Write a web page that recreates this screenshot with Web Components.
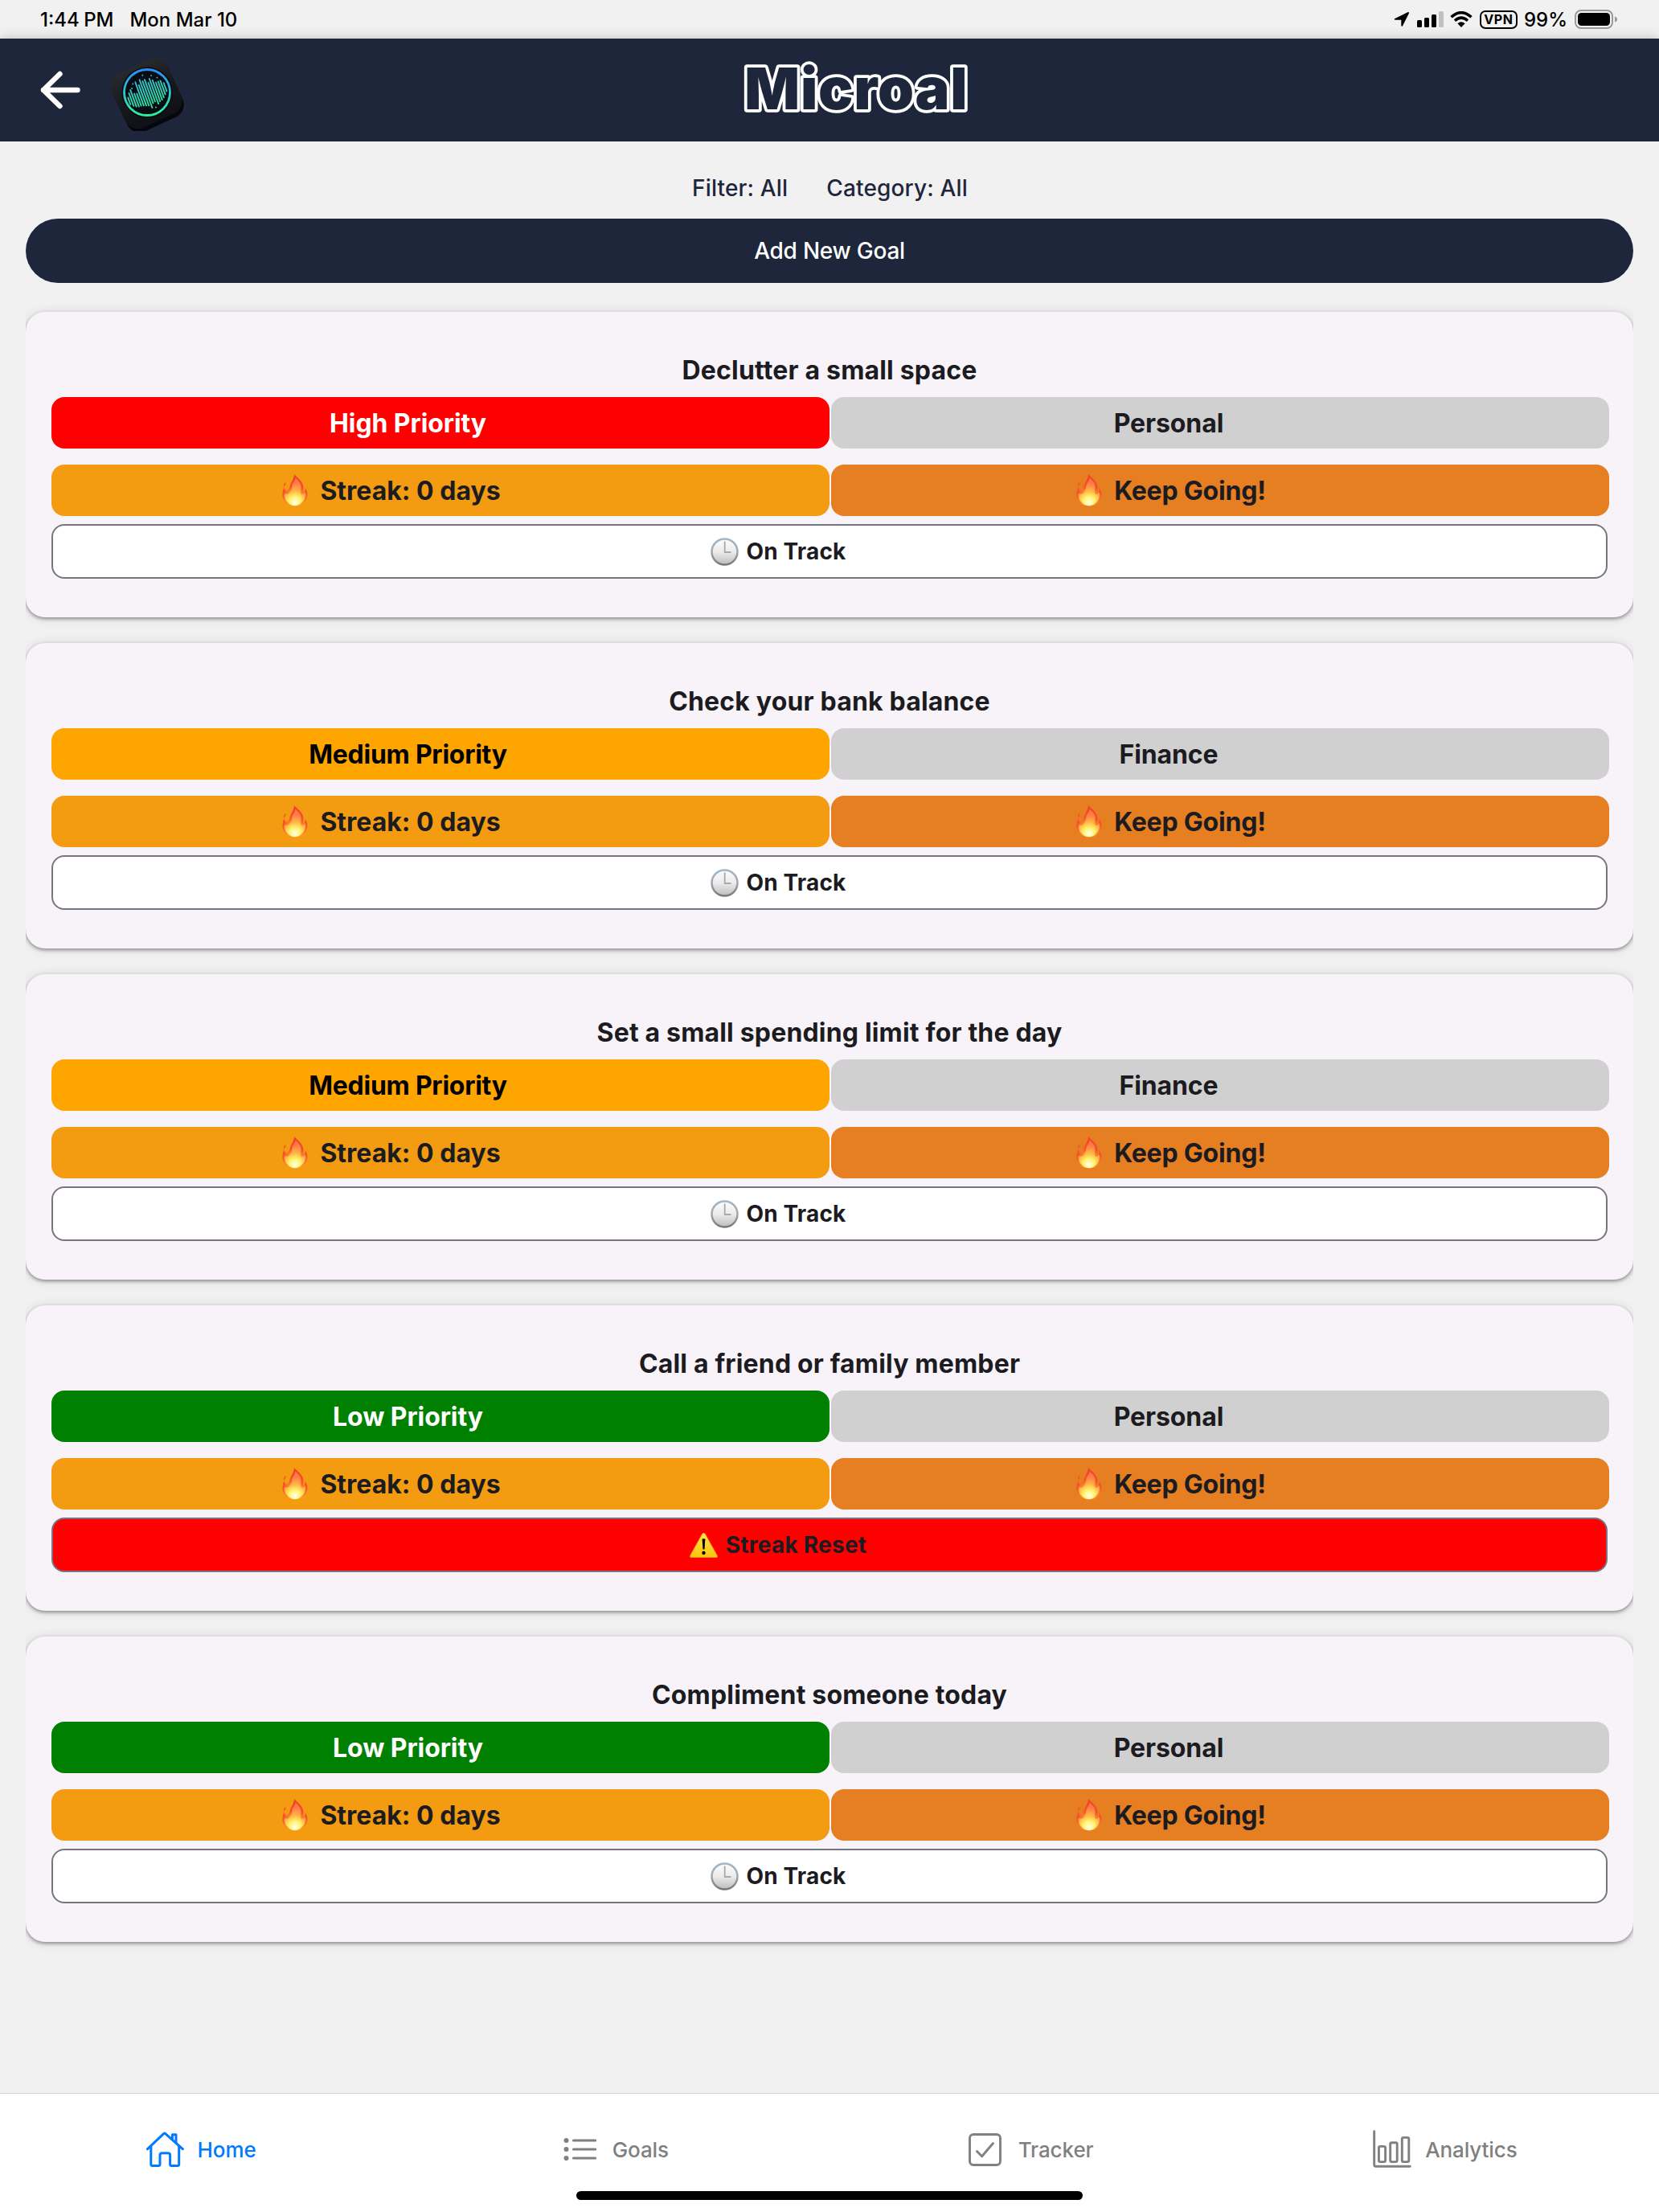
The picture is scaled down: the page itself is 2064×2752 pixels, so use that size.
<!DOCTYPE html>
<html lang="en">
<head>
<meta charset="utf-8">
<title>Microal</title>
<style>
  html, body { margin: 0; height: 100%; }
  body { background: #f1f1f1; font-family: Inter, "Liberation Sans", sans-serif; }
</style>
</head>
<body>
<microal-app></microal-app>

<script>
// Attach an open shadow root and fill it with the given markup
function shadow(el, html) {
  const root = el.shadowRoot || el.attachShadow({ mode: "open" });
  root.innerHTML = html;
  return root;
}

const ICONS = {
  fire: `<svg width="32" height="40" viewBox="0 0 32 40">
    <defs>
      <radialGradient id="f1" gradientUnits="userSpaceOnUse" cx="16" cy="31" r="27">
        <stop offset="0" stop-color="#ffd43a"/><stop offset=".36" stop-color="#ff9b2e"/>
        <stop offset=".6" stop-color="#f9502a"/><stop offset="1" stop-color="#f2432f"/>
      </radialGradient>
      <radialGradient id="f2" gradientUnits="userSpaceOnUse" cx="16" cy="35" r="24">
        <stop offset="0" stop-color="#fffff0"/><stop offset=".3" stop-color="#fff46b"/>
        <stop offset=".6" stop-color="#ffb643"/><stop offset="1" stop-color="#ff7a45"/>
      </radialGradient>
    </defs>
    <path fill="url(#f1)" d="M15 0C18 4 26 8 26.500 16C26.600 19 25.500 21 27 22C29 22 28.600 18 28.500 16.500C31 20 32.500 25 30.500 30C28.500 36.500 22.500 39.500 16 39.500C9 39.500 3 36 1 29.500C-.5 24 1.500 20 2 16.500C3.500 18 3.500 20.500 5 21C8.500 20 9 17 10 13.500C11 9.500 14.500 6.500 15 0Z"/>
    <path fill="#f9502a" d="M4.500 10C5 13 2.500 14.500 2.200 16C1.300 13.500 2.500 11 4.500 10Z"/>
    <path fill="url(#f2)" d="M16.500 4.500C19.500 8 24 10.500 23.500 16.500C23.200 20 22 22 24 25C26 26 27.500 23.500 28.300 22C30 27 28 32.500 24 35.500C21.500 38 19 39.300 16 39.300C12.500 39.300 9 37.500 7 35C3.500 32 2.500 28 3.500 24C6 25.500 9 24.500 11 20.500C13 16.500 11.500 13.500 14 10.500C16 8 16.500 6.500 16.500 4.500Z"/>
  </svg>`,
  clock: `<svg width="35" height="35" viewBox="0 0 35 35">
    <defs>
      <linearGradient id="c1" x1="0" y1="0" x2="0" y2="1">
        <stop offset="0" stop-color="#9fb6ca"/><stop offset=".5" stop-color="#a4a8ab"/><stop offset="1" stop-color="#777"/>
      </linearGradient>
      <linearGradient id="c2" x1="0" y1="0" x2="0" y2="1">
        <stop offset="0" stop-color="#fcfcfc"/><stop offset=".5" stop-color="#ececec"/><stop offset="1" stop-color="#bcbcbc"/>
      </linearGradient>
    </defs>
    <circle cx="17.500" cy="17.500" r="16" fill="url(#c2)" stroke="url(#c1)" stroke-width="2.500"/>
    <path d="M17.700 4.500V18H25.500" fill="none" stroke="#a9a9a9" stroke-width="1.800"/>
  </svg>`,
  warning: `<svg width="35" height="31" viewBox="0 0 35 31">
    <defs><linearGradient id="w1" x1="0" y1="0" x2="0" y2="1">
      <stop offset="0" stop-color="#ffe04a"/><stop offset="1" stop-color="#fdc50b"/>
    </linearGradient></defs>
    <path fill="url(#w1)" stroke="#d9a32a" stroke-width=".6" d="M15.700 1.300Q17.500-.8 19.300 1.300L34.300 28.300Q35.200 30.600 33 30.700H2Q-.2 30.600.7 28.300Z"/>
    <path d="M15.600 7.500H19.400L18.500 20.500H16.500Z"/><circle cx="17.500" cy="25" r="2.200"/>
  </svg>`,
  home: `<svg width="47" height="44" viewBox="0 0 47 44" fill="none" stroke="currentColor" stroke-width="3" stroke-linecap="round" stroke-linejoin="round">
    <path d="M1.500 21.700L21.300 2.800Q22.700 1.500 24.100 2.800L45.300 21.700"/>
    <path d="M5.800 18.500V40.500Q5.800 42.500 7.800 42.500H15Q17 42.500 17 40.500V29.500Q17 26.800 19.700 26.800H26.900Q29.600 26.800 29.600 29.500V40.500Q29.600 42.500 31.600 42.500H38.700Q40.700 42.500 40.700 40.500V18.500"/>
    <path d="M32.400 9.500V3.700H37V13.500"/>
  </svg>`,
  list: `<svg width="41" height="28" viewBox="0 0 41 28" stroke="currentColor" stroke-width="3.200" stroke-linecap="round">
    <path d="M12.500 3H39.500M12.500 14H39.500M12.500 25H39.500"/>
    <g fill="currentColor" stroke="none"><circle cx="3.500" cy="3" r="3"/><circle cx="3.500" cy="14" r="3"/><circle cx="3.500" cy="25" r="3"/></g>
  </svg>`,
  check: `<svg width="41" height="41" viewBox="0 0 41 41" fill="none" stroke="currentColor" stroke-width="2.900" stroke-linecap="round" stroke-linejoin="round">
    <rect x="1.500" y="1.500" width="38" height="38" rx="4.500"/><path d="M10.500 22.500L16.600 28.700L30.500 12.500"/>
  </svg>`,
  chart: `<svg width="48" height="48" viewBox="0 0 48 48" fill="none" stroke="currentColor" stroke-width="2.900" stroke-linecap="round" stroke-linejoin="round">
    <path d="M1.700 1.700V43.200Q1.700 45.200 3.700 45.200H46.300"/>
    <rect x="7.400" y="20.400" width="8.200" height="19.200" rx="1.800"/>
    <rect x="21.700" y="15.800" width="8.500" height="23.800" rx="1.800"/>
    <rect x="36.300" y="9.400" width="8.500" height="30.200" rx="1.800"/>
  </svg>`
};

class StatusBar extends HTMLElement {
  connectedCallback() {
    shadow(this, `
      <style>
        :host {
          display: flex;
          align-items: center;
          box-sizing: border-box;
          height: 48px;
          padding: 0 51px 0 50px;
          font-size: 24px;
          font-weight: 500;
          color: #000;
          background: #f1f1f1;
        }
        .date { margin-left: 20px; }
        .time { word-spacing: -1px; }
        .right { display: flex; align-items: center; margin-left: auto; }
        svg { display: block; }
        .vpn {
          box-sizing: border-box;
          width: 47px;
          height: 23px;
          border: 2.5px solid #000;
          border-radius: 7px;
          font: 700 16px/18px Inter, sans-serif;
          letter-spacing: .6px;
          text-align: center;
          margin: 0 8px 0 9px;
        }
      </style>
      <span class="time">1:44 PM</span>
      <span class="date">Mon Mar 10</span>
      <div class="right">
        <svg width="20" height="20" viewBox="0 0 20 20" style="margin-right:9px">
          <path d="M1.200 9.300L17.300 1.200Q19.400.6 18.800 2.700L11 18.200Q9.800 19.700 9.300 17.800V10.800H2Q-.1 10.300 1.200 9.300Z"/>
        </svg>
        <svg width="34" height="20" viewBox="0 0 34 20" style="margin-right:7px">
          <rect y="11" width="6" height="9" rx="1.500"/><rect x="9" y="8" width="6" height="12" rx="1.500"/>
          <rect x="18" y="4" width="6" height="16" rx="1.500"/><rect x="27" width="6" height="20" rx="1.500" fill="#c1c1c1"/>
        </svg>
        <svg width="28" height="20" viewBox="0 0 28 20" fill="none" stroke="#000" stroke-width="3.500">
          <path d="M1.500 7.300Q14-4 26.500 7.300"/><path d="M6 11.800Q14 4.600 22 11.800"/>
          <path fill="#000" stroke="none" d="M9.400 15.300Q14 11.300 18.600 15.300L14 20Z"/>
        </svg>
        <span class="vpn">VPN</span>
        <span>99%</span>
        <svg width="54" height="24" viewBox="0 0 54 24" style="margin-left:9px">
          <rect x="1" y="1" width="46" height="22" rx="7" fill="none" stroke="#9a9a9a" stroke-width="2"/>
          <rect x="4" y="4" width="40" height="16" rx="4.500"/>
          <path d="M50 8.500Q53 9.500 53 12T50 15.500Z" fill="#9a9a9a"/>
        </svg>
      </div>
    `);
  }
}

class AppHeader extends HTMLElement {
  connectedCallback() {
    shadow(this, `
      <style>
        :host {
          display: flex;
          align-items: center;
          box-sizing: border-box;
          height: 128px;
          padding: 0 164px 0 49px;
          background: #1e263b;
          box-shadow: 0 0 14px rgba(0, 0, 0, .22);
        }
        svg { display: block; flex: none; }
        .logo { margin: 10px 0 0 35px; }
        .title { margin: 0 auto; }
        .title text {
          font-size: 72px;
          font-weight: 900;
          letter-spacing: .8px;
          fill: #1e263b;
          stroke: #fff;
          stroke-width: 7.500px;
          stroke-linejoin: round;
          paint-order: stroke fill;
        }
      </style>
      <svg width="52" height="48" viewBox="0 0 52 48" fill="none" stroke="#fff" stroke-width="6.400" stroke-linecap="round" stroke-linejoin="round">
        <path d="M25.500 4L5 24L25.500 44M5 24H47.500"/>
      </svg>
      <svg class="logo" width="94" height="92" viewBox="-47 -46 94 92">
        <defs>
          <linearGradient id="ring" x1="0" y1="0" x2="0" y2="1">
            <stop offset="0" stop-color="#2490f5"/><stop offset=".5" stop-color="#2fc4d0"/><stop offset="1" stop-color="#2df09a"/>
          </linearGradient>
          <linearGradient id="bars" gradientUnits="userSpaceOnUse" x1="0" y1="-24" x2="0" y2="22">
            <stop offset="0" stop-color="#35b5d8"/><stop offset="1" stop-color="#2fe69a"/>
          </linearGradient>
          <linearGradient id="face" x1="0" y1="0" x2="0" y2="1">
            <stop offset="0" stop-color="#28292c"/><stop offset=".5" stop-color="#18191d"/><stop offset="1" stop-color="#101116"/>
          </linearGradient>
        </defs>
        <rect x="-38.500" y="-35" width="76" height="76" rx="17" fill="#06070d" transform="rotate(-25)"/>
        <rect x="-38.500" y="-38" width="76" height="74" rx="17" fill="url(#face)" transform="rotate(-25)"/>
        <circle cx="0" cy="-2" r="31.500" fill="#06080d"/>
        <circle cx="0" cy="-2" r="28.500" fill="#080d14" stroke="url(#ring)" stroke-width="2.800"/>
        <g transform="translate(0 -2) rotate(-20)" stroke="url(#bars)" stroke-width="1.900" stroke-linecap="round">
          <path d="M-24.500-2V7M-21.500-7V10M-18.500-10V12M-15.500-4V13M-12.500-3V13M-9.500-17V14M-6.500-12V15M-3.500-18V16M-.5-15V20M2.500-16V15M5.500-11V14M8.500-15V18M11.500-12V16M14.500-8V15M17.500-8V13M20.500-8V10M23.500-4V7"/>
          <path d="M-13-16V-16.100M-16-11V-11.100M2-22V-22.100M12-18V-18.100M18-13V-13.100M4 21V21.100"/>
        </g>
      </svg>
      <svg class="title" width="290" height="112" viewBox="0 0 290 112">
        <text x="145.400" y="80" text-anchor="middle">Microal</text>
      </svg>
    `);
  }
}

class GoalChip extends HTMLElement {
  connectedCallback() {
    const icon = this.getAttribute("icon");
    shadow(this, `
      <style>
        :host {
          display: flex;
          flex: none;
          align-items: center;
          justify-content: center;
          box-sizing: border-box;
          width: 968px;
          height: 64px;
          padding-right: 128px;
          border-radius: 16px;
          font-size: 32px;
          font-weight: 700;
          letter-spacing: -.1px;
          color: #1c1b1f;
          background: #d0d0d0;
        }
        :host([kind="high"]) { background: #ff0000; color: #fff; padding-right: 81px; }
        :host([kind="medium"]) { background: #ffa500; color: #000; padding-right: 81px; letter-spacing: -.25px; }
        :host([kind="low"]) { background: #008000; color: #fff; padding-right: 81px; }
        :host([kind="streak"]) { background: #f39c12; padding-right: 122px; letter-spacing: 0; }
        :host([kind="keep"]) { background: #e67e22; padding-right: 122px; letter-spacing: -.2px; }
        :host([kind="track"]), :host([kind="reset"]) {
          width: 1936px;
          height: 68px;
          border: 2px solid #79747e;
          background: #fff;
          font-size: 28px;
          letter-spacing: .15px;
        }
        :host([kind="reset"]) { background: #ff0000; letter-spacing: .25px; }
        svg { flex: none; margin-right: 15px; }
        :host([kind="track"]) svg, :host([kind="reset"]) svg { margin-right: 10px; }
      </style>
      ${icon ? ICONS[icon] : ""}
      <slot></slot>
    `);
  }
}

class GoalCard extends HTMLElement {
  connectedCallback() {
    const priority = this.getAttribute("priority");
    const reset = this.hasAttribute("reset");
    shadow(this, `
      <style>
        :host {
          display: block;
          box-sizing: border-box;
          height: 380px;
          padding: 53px 32px 0;
          border-radius: 24px;
          background: #f7f3f9;
          box-shadow: 0 2px 4px rgba(0, 0, 0, .38), 0 1px 14px rgba(0, 0, 0, .12);
        }
        h2 {
          margin: 0 0 13px;
          font-size: 32px;
          line-height: 40px;
          font-weight: 700;
          letter-spacing: .17px;
          text-align: center;
          color: #1c1b1f;
        }
        .row { display: flex; gap: 2px; }
        .row + .row { margin: 20px 0 10px; }
      </style>
      <h2><slot></slot></h2>
      <div class="row">
        <goal-chip kind="${priority.toLowerCase()}">${priority} Priority</goal-chip>
        <goal-chip>${this.getAttribute("category")}</goal-chip>
      </div>
      <div class="row">
        <goal-chip kind="streak" icon="fire">Streak: 0 days</goal-chip>
        <goal-chip kind="keep" icon="fire">Keep Going!</goal-chip>
      </div>
      ${reset
        ? `<goal-chip kind="reset" icon="warning">Streak Reset</goal-chip>`
        : `<goal-chip kind="track" icon="clock">On Track</goal-chip>`}
    `);
  }
}

class TabItem extends HTMLElement {
  connectedCallback() {
    shadow(this, `
      <style>
        :host {
          display: flex;
          flex: 1;
          align-items: center;
          justify-content: center;
          gap: 17px;
          padding-right: 16px;
          font-size: 26px;
          font-weight: 500;
          letter-spacing: -.1px;
          color: #808080;
        }
        :host([active]) { color: #007aff; }
        :host([icon="list"]) { gap: 20px; }
        :host([icon="check"]) { gap: 21px; padding-right: 15px; }
        svg { display: block; flex: none; }
      </style>
      ${ICONS[this.getAttribute("icon")]}
      <span><slot></slot></span>
    `);
  }
}

class TabBar extends HTMLElement {
  connectedCallback() {
    shadow(this, `
      <style>
        :host {
          display: block;
          box-sizing: border-box;
          height: 148px;
          border-top: 1px solid #d4d4d4;
          background: #fff;
        }
        nav { display: flex; box-sizing: border-box; height: 121px; padding-top: 17px; }
        .indicator { width: 630px; height: 11px; margin: 0 auto; border-radius: 6px; background: #000; }
      </style>
      <nav><slot></slot></nav>
      <div class="indicator"></div>
    `);
  }
}

class MicroalApp extends HTMLElement {
  connectedCallback() {
    shadow(this, `
      <style>
        :host { display: flex; flex-direction: column; height: 2752px; }
        main {
          flex: 1;
          min-height: 0;
          position: relative;
          box-sizing: border-box;
          padding: 0 32px;
          background: #f1f1f1;
        }
        .filters {
          display: flex;
          justify-content: center;
          align-items: center;
          gap: 48px;
          box-sizing: border-box;
          height: 96px;
          padding: 20px 0 0 1px;
          font-size: 28px;
          font-weight: 500;
          letter-spacing: .15px;
          color: #1e263b;
        }
        .add {
          display: block;
          width: 100%;
          height: 80px;
          padding: 0;
          border: 0;
          border-radius: 40px;
          background: #1e263b;
          color: #fff;
          font: 500 28px Inter, sans-serif;
          letter-spacing: -.24px;
        }
        .list {
          display: flex;
          flex-direction: column;
          gap: 32px;
          margin-top: 36px;
          overflow-x: clip;
        }
      </style>
      <status-bar></status-bar>
      <app-header></app-header>
      <main>
        <div class="filters"><span>Filter: All</span><span>Category: All</span></div>
        <button class="add">Add New Goal</button>
        <div class="list">
          <goal-card priority="High" category="Personal">Declutter a small space</goal-card>
          <goal-card priority="Medium" category="Finance">Check your bank balance</goal-card>
          <goal-card priority="Medium" category="Finance">Set a small spending limit for the day</goal-card>
          <goal-card priority="Low" category="Personal" reset>Call a friend or family member</goal-card>
          <goal-card priority="Low" category="Personal">Compliment someone today</goal-card>
        </div>
      </main>
      <tab-bar>
        <tab-item icon="home" active>Home</tab-item>
        <tab-item icon="list">Goals</tab-item>
        <tab-item icon="check">Tracker</tab-item>
        <tab-item icon="chart">Analytics</tab-item>
      </tab-bar>
    `);
  }
}

customElements.define("status-bar", StatusBar);
customElements.define("app-header", AppHeader);
customElements.define("goal-chip", GoalChip);
customElements.define("goal-card", GoalCard);
customElements.define("tab-item", TabItem);
customElements.define("tab-bar", TabBar);
customElements.define("microal-app", MicroalApp);
</script>
</body>
</html>
